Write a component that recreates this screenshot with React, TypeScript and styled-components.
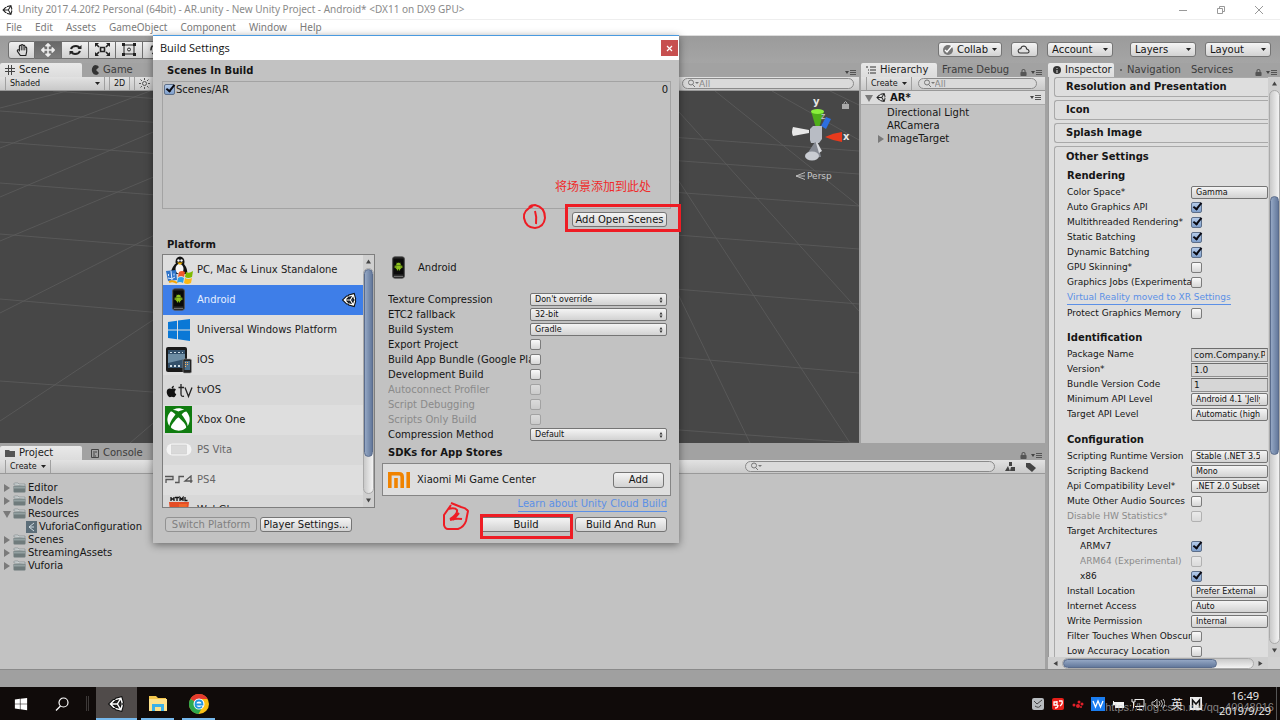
import React from 'react';
import styled, { createGlobalStyle, css } from 'styled-components';
import { FaUnity, FaWindows, FaApple, FaXbox, FaRegHandPaper, FaArrowsAlt, FaLock } from 'react-icons/fa';

const ui = '"DejaVu Sans", sans-serif';
const sys = '"Noto Sans", sans-serif';

const GlobalStyle = createGlobalStyle`
  *, *::before, *::after { box-sizing: border-box; }
  body { margin: 0; background: #a2a2a2; font-family: ${ui}; font-size: 10px; color: #151515; overflow: hidden; }
  ul { list-style: none; margin: 0; padding: 0; }
  button, input, select { font-family: inherit; margin: 0; }
  svg { display: block; flex: none; }
  h2, h3 { margin: 0; }
`;

/* ---------- shell ---------- */
const Shell = styled.div`
  height: 100vh;
  display: flex;
  flex-direction: column;
`;
const TitleBar = styled.header`
  height: 19px;
  flex: none;
  display: flex;
  align-items: center;
  gap: 4px;
  padding: 0 16px 0 2px;
  background: #fff;
  color: #8a8a8a;
  font: 10px/19px ${sys};
`;
const WindowButtons = styled.div`
  margin-left: auto;
  display: flex;
  gap: 28px;
`;
const WindowButton = styled.button`
  border: 0;
  padding: 0;
  background: none;
  color: #999;
  display: flex;
`;
const MenuBar = styled.nav`
  height: 17px;
  flex: none;
  display: flex;
  gap: 13px;
  padding: 0 6px;
  background: #fff;
  border-top: 1px solid #eee;
  border-bottom: 1px solid #ddd;
`;
const MenuItem = styled.button`
  border: 0;
  padding: 0;
  background: none;
  color: #7a7a7a;
  font: 10px/15px ${sys};
`;
const Toolbar = styled.div`
  height: 27px;
  flex: none;
  display: flex;
  align-items: center;
  justify-content: space-between;
  padding: 0 8px;
  background: linear-gradient(#9b9b9b, #a5a5a5);
`;
const Group = styled.div<{ $gap?: number; $end?: number }>`
  display: flex;
  align-items: center;
  gap: ${p => p.$gap ?? 0}px;
  padding-right: ${p => p.$end ?? 0}px;
`;
const ToolButton = styled.button<{ $on?: boolean }>`
  width: 27px;
  height: 18px;
  padding: 0;
  display: flex;
  align-items: center;
  justify-content: center;
  border: 1px solid #6f6f6f;
  border-left-width: 0;
  color: ${p => (p.$on ? '#eee' : '#222')};
  background: ${p => (p.$on ? 'linear-gradient(#686868, #7c7c7c)' : 'linear-gradient(#f0f0f0, #cfcfcf)')};
  &:first-child { border-left-width: 1px; border-radius: 3px 0 0 3px; }
`;
const face = css`
  border: 1px solid #757575;
  border-radius: 3px;
  background: linear-gradient(#f4f4f4, #d2d2d2);
  color: #151515;
`;
const TopButton = styled.button<{ $w: number }>`
  ${face}
  width: ${p => p.$w}px;
  height: 15px;
  padding: 0 4px;
  display: flex;
  align-items: center;
  justify-content: space-between;
  font-size: 10px;
  line-height: 13px;
`;

/* ---------- docked panes ---------- */
const Workspace = styled.div`
  flex: 1;
  min-height: 0;
  display: flex;
  gap: 3px;
`;
const MainArea = styled.div`
  flex: 1;
  min-width: 0;
  display: flex;
  flex-direction: column;
  gap: 3px;
`;
const TopRow = styled.div`
  flex: 1;
  min-height: 0;
  display: flex;
  gap: 2px;
`;
const Pane = styled.section<{ $w?: number; $h?: number }>`
  ${p => (p.$w ? `width: ${p.$w}px; flex: none;` : p.$h ? `height: ${p.$h}px; flex: none;` : 'flex: 1; min-width: 0;')}
  display: flex;
  flex-direction: column;
`;
const TabBar = styled.div`
  height: 14px;
  flex: none;
  display: flex;
  align-items: stretch;
`;
const Tab = styled.button<{ $on?: boolean; $w?: number }>`
  ${p => p.$w && `width: ${p.$w}px;`}
  display: flex;
  align-items: center;
  gap: 4px;
  padding: 0 5px;
  border: 0;
  font-size: 10px;
  line-height: 14px;
  white-space: nowrap;
  color: ${p => (p.$on ? '#1c1c1c' : '#3c3c3c')};
  background: ${p => (p.$on ? 'linear-gradient(#e9e9e9, #dcdcdc)' : 'none')};
  border-radius: 2px 2px 0 0;
`;
const TabEnd = styled.div`
  margin-left: auto;
  padding: 4px 3px 0 0;
  display: flex;
  gap: 4px;
  align-items: center;
  color: #555;
`;
const Strip = styled.div`
  height: 14px;
  flex: none;
  display: flex;
  align-items: center;
  padding: 0 5px;
  background: linear-gradient(#e2e2e2, #c9c9c9);
  border-bottom: 1px solid #999;
`;
const StripButton = styled.button<{ $w?: number }>`
  ${p => p.$w && `width: ${p.$w}px;`}
  height: 13px;
  padding: 0 4px;
  display: flex;
  align-items: center;
  justify-content: space-between;
  gap: 4px;
  border: 0;
  border-left: 1px solid #a0a0a0;
  border-right: 1px solid #a0a0a0;
  background: none;
  font-size: 8px;
  color: #151515;
`;
const SearchBox = styled.label<{ $w: number }>`
  width: ${p => p.$w}px;
  height: 11px;
  display: flex;
  align-items: center;
  padding: 0 4px;
  border: 1px solid #8a8a8a;
  border-radius: 6px;
  background: #dadada;
  color: #777;
  input {
    flex: 1;
    min-width: 0;
    height: 9px;
    padding: 0;
    border: 0;
    background: none;
    font-size: 9px;
    line-height: 9px;
    outline: 0;
  }
  input::placeholder { color: #888; }
`;
const SceneView = styled.div`
  flex: 1;
  min-height: 0;
  position: relative;
  overflow: hidden;
  background: #474747;
`;
const SceneGrid = styled.svg`
  position: absolute;
  inset: 0;
  width: 100%;
  height: 100%;
`;
const Gizmo = styled.div`
  position: absolute;
  right: 0;
  top: 0;
`;
const PaneBody = styled.div`
  flex: 1;
  min-height: 0;
  background: #c2c2c2;
`;
const SceneRoot = styled.div`
  height: 14px;
  display: flex;
  align-items: center;
  gap: 3px;
  padding: 0 4px;
  background: #dcdcdc;
  border-bottom: 1px solid #aaa;
  font-weight: bold;
  span { flex: 1; }
`;
const Tree = styled.ul<{ $top: number }>`
  padding-top: ${p => p.$top}px;
`;
const TreeRow = styled.li<{ $indent: number }>`
  display: flex;
  align-items: center;
  gap: 2px;
  padding-left: ${p => p.$indent}px;
  height: 13px;
  line-height: 13px;
`;

/* ---------- form parts ---------- */
const Check = styled.input.attrs({ type: 'checkbox' })`
  appearance: none;
  position: relative;
  width: 11px;
  height: 11px;
  flex: none;
  border: 1px solid #7c7c7c;
  border-radius: 2px;
  background: linear-gradient(#fafafa, #d6d6d6);
  &:checked { background: linear-gradient(#b4cbea, #7f9fcb); border-color: #5d6f8a; }
  &:checked::after {
    content: '';
    position: absolute;
    left: 3px;
    top: -2px;
    width: 5px;
    height: 9px;
    border: solid #0a0a12;
    border-width: 0 2px 2px 0;
    transform: rotate(38deg);
  }
  &:disabled { opacity: 0.45; }
`;
const SelectFrame = styled.span`
  ${face}
  position: relative;
  flex: 1;
  min-width: 0;
  height: 13px;
  display: flex;
  align-items: center;
  border-radius: 2px;
  padding-right: 3px;
  select {
    flex: 1;
    min-width: 0;
    appearance: none;
    border: 0;
    padding: 0 4px;
    background: none;
    color: #111;
    font-size: 8px;
    line-height: 10px;
    outline: 0;
  }
`;
const PushButton = styled.button<{ $w: number; $tall?: boolean }>`
  ${face}
  width: ${p => p.$w}px;
  height: ${p => (p.$tall ? 16 : 15)}px;
  padding: 0;
  font-size: 10px;
  line-height: 12px;
  white-space: nowrap;
  &:disabled { color: #808080; background: #c6c6c6; border-color: #929292; }
`;
const Row = styled.label<{ $dim?: boolean; $indent?: number }>`
  display: flex;
  align-items: center;
  height: 15px;
  padding-left: ${p => p.$indent ?? 0}px;
  color: ${p => (p.$dim ? '#8a8a8a' : '#151515')};
`;
const RowText = styled.span<{ $w: number }>`
  width: ${p => p.$w}px;
  flex: none;
  overflow: hidden;
  white-space: nowrap;
  line-height: 15px;
`;
const TextField = styled.input`
  flex: 1;
  min-width: 0;
  height: 14px;
  padding: 0 2px;
  border: 1px solid #8f8f8f;
  border-top-color: #6d6d6d;
  background: #d6d6d6;
  font-size: 9px;
  color: #151515;
  outline: 0;
`;

/* ---------- inspector ---------- */
const InspectorBody = styled.div`
  flex: 1;
  min-height: 0;
  display: grid;
  grid-template: minmax(0, 1fr) 12px / minmax(0, 1fr) 12px;
  background: #d2d2d2;
`;
const InspectorScroll = styled.div`
  overflow: hidden;
  padding-left: 5px;
  background: #dedede;
  border-left: 1px solid #999;
`;
const Fold = styled.div`
  border: 1px solid #a9a9a9;
  border-right: 0;
  border-radius: 3px 0 0 3px;
  padding-left: 11px;
  margin-bottom: 3px;
`;
const FoldTitle = styled.h2<{ $h?: number }>`
  font-size: 10px;
  line-height: ${p => p.$h ?? 18}px;
`;
const GroupTitle = styled.h3<{ $gap?: number }>`
  font-size: 10px;
  line-height: 18px;
  margin-top: ${p => p.$gap ?? 0}px;
`;
const FoldRows = styled.div`
  padding-left: 1px;
  font-size: 9px;
`;
const Link = styled.a`
  display: table;
  height: 14px;
  line-height: 14px;
  margin-bottom: 1px;
  color: #5c90e6;
  text-decoration: none;
  border-bottom: 1px solid #5c90e6;
`;
const Bar = styled.div<{ $across?: boolean }>`
  display: flex;
  flex-direction: ${p => (p.$across ? 'row' : 'column')};
  align-items: center;
  justify-content: space-between;
  gap: 3px;
  padding: ${p => (p.$across ? '0 4px' : '3px 0')};
  background: #cfcfcf;
`;
const Track = styled.div<{ $across?: boolean }>`
  flex: 1;
  display: flex;
  flex-direction: ${p => (p.$across ? 'row' : 'column')};
  ${p => (p.$across ? 'height: 11px;' : 'width: 11px;')}
  border: 1px solid #aaa;
  border-radius: 6px;
  background: linear-gradient(${p => (p.$across ? '180deg' : '90deg')}, #c9c9c9, #f3f3f3);
`;
const Thumb = styled.div<{ $across?: boolean; $size: number }>`
  flex: 0 0 ${p => p.$size}%;
  border-radius: 6px;
  border: 1px solid #5a6c8c;
  background: linear-gradient(${p => (p.$across ? '180deg' : '90deg')}, #94a7c4, #64799c);
`;
const Spacer = styled.div<{ $grow: number }>`
  flex: ${p => p.$grow} 0 0;
`;

/* ---------- dialog ---------- */
const Dialog = styled.div`
  position: absolute;
  left: 153px;
  top: 35px;
  width: 526px;
  background: #c2c2c2;
  border-top: 1px solid #4a9ae0;
  box-shadow: 0 2px 8px rgba(0, 0, 0, 0.45);
`;
const DialogTitle = styled.div`
  height: 24px;
  padding: 0 1px 0 7px;
  display: flex;
  align-items: center;
  justify-content: space-between;
  background: #fff;
  color: #111;
  font: 11px/24px "Open Sans", sans-serif;
`;
const CloseButton = styled.button`
  width: 17px;
  height: 16px;
  padding: 0;
  display: flex;
  align-items: center;
  justify-content: center;
  border: 0;
  background: #c75050;
`;
const DialogBody = styled.div`
  padding: 0 8px 11px 9px;
`;
const Caption = styled.h2<{ $h: number; $in: number }>`
  font-size: 10px;
  line-height: ${p => p.$h}px;
  padding-left: ${p => p.$in}px;
`;
const SceneList = styled.div`
  height: 128px;
  padding: 0 2px 0 1px;
  border: 1px solid #a3a3a3;
  label { display: flex; align-items: center; gap: 1px; height: 14px; }
  span { flex: 1; }
`;
const ButtonRow = styled.div`
  display: flex;
  justify-content: flex-end;
  padding: 3px 4px 8px 0;
`;
const Columns = styled.div`
  display: flex;
  gap: 7px;
`;
const PlatformBox = styled.div`
  width: 213px;
  height: 254px;
  flex: none;
  display: flex;
  border: 1px solid #7e7e7e;
`;
const PlatformList = styled.ul`
  flex: 1;
  overflow: hidden;
`;
const PlatformItem = styled.li<{ $on?: boolean; $dim?: boolean }>`
  height: 30px;
  display: flex;
  align-items: center;
  gap: 4px;
  padding: 0 6px 1px 1px;
  color: ${p => (p.$on ? '#e6eeff' : p.$dim ? '#666' : '#202020')};
  background: #dedede;
  &:nth-child(odd) { background: #d8d8d8; }
  &:nth-child(-n + 4) { background: #dedede; }
  ${p => p.$on && '&& { background: #3e7ee8; }'}
  > span:nth-child(2) { flex: 1; }
`;
const PlatformIcon = styled.span`
  width: 29px;
  height: 28px;
  display: flex;
  align-items: center;
  justify-content: center;
  flex: none;
`;
const Detail = styled.div`
  flex: 1;
  min-width: 0;
  display: flex;
  flex-direction: column;
`;
const DetailHead = styled.div`
  height: 38px;
  padding: 0 0 12px 10px;
  display: flex;
  align-items: center;
  gap: 13px;
`;
const DetailRows = styled.div`
  padding: 0 4px 0 6px;
`;
const StoreCard = styled.div`
  height: 33px;
  display: flex;
  align-items: center;
  gap: 7px;
  padding: 0 6px 0 5px;
  border: 1px solid #858585;
  background: #dedede;
  span { flex: 1; }
`;
const CloudLink = styled.div`
  align-self: flex-end;
  padding: 1px 4px 0 0;
`;
const Footer = styled.div`
  display: flex;
  justify-content: space-between;
  padding: 4px 4px 0 3px;
`;

/* ---------- annotations ---------- */
const RedBox = styled.div<{ $x: number; $y: number; $w: number; $h: number }>`
  position: absolute;
  left: ${p => p.$x}px;
  top: ${p => p.$y}px;
  width: ${p => p.$w}px;
  height: ${p => p.$h}px;
  border: 3px solid #ee1c24;
`;
const RedNote = styled.div`
  position: absolute;
  left: 402px;
  top: 142px;
  color: #f02a2a;
  font: 12px/16px "Noto Sans CJK SC", sans-serif;
  white-space: nowrap;
`;
const RedMark = styled.svg<{ $x: number; $y: number }>`
  position: absolute;
  left: ${p => p.$x}px;
  top: ${p => p.$y}px;
`;

/* ---------- status and task bar ---------- */
const StatusBar = styled.div`
  height: 18px;
  flex: none;
  background: #a0a0a0;
  border-top: 1px solid #8a8a8a;
`;
const TaskBar = styled.footer`
  position: relative;
  height: 33px;
  flex: none;
  display: flex;
  align-items: stretch;
  background: #100b0a;
  color: #f0f0f0;
`;
const TaskButton = styled.button<{ $on?: boolean; $run?: number }>`
  position: relative;
  width: 41px;
  padding: 0;
  display: flex;
  align-items: center;
  justify-content: center;
  border: 0;
  color: #fff;
  background: ${p => (p.$on ? '#504b4a' : 'none')};
  &::after {
    content: '';
    position: absolute;
    bottom: 0;
    height: 2px;
    width: ${p => p.$run ?? 0}px;
    background: #76b9ed;
  }
`;
const Divider = styled.div`
  width: 3px;
  margin: 9px 7px 9px 4px;
  border: solid #3d3938;
  border-width: 0 1px;
`;
const Tray = styled.div`
  margin-left: auto;
  display: flex;
  align-items: center;
  gap: 6px;
  font: 12px/14px "Noto Sans CJK SC", sans-serif;
`;
const Clock = styled.div`
  width: 68px;
  margin-right: 3px;
  padding: 1px 0 0 5px;
  align-self: stretch;
  text-align: center;
  font: 11px/15px "Open Sans", sans-serif;
  border-right: 1px solid #555;
`;
const Watermark = styled.div`
  position: absolute;
  right: 6px;
  top: 13px;
  color: rgba(200, 200, 200, 0.62);
  font: 11px/14px "Liberation Sans", sans-serif;
`;

/* ---------- drawings ---------- */
const Caret = () => <svg width="5" height="3"><path d="M0 0h5L2.500 3z" fill="#222" /></svg>;
const UpDown = () => <svg width="4" height="6"><path d="M2 0l1.500 2.500h-3zM2 6L.5 3.500h3z" fill="#333" /></svg>;
const Arrow = ({ d }: { d: 'u' | 'd' | 'l' | 'r' }) => (
  <svg width="7" height="7" viewBox="0 0 7 7">
    <path fill="#444" d={{ u: 'M1 5.500L3.500 1.500 6 5.500z', d: 'M1 1.500h5L3.500 5.500z', l: 'M5.500 1v5L1.500 3.500z', r: 'M1.500 1v5l4-2.500z' }[d]} />
  </svg>
);
const Twist = ({ open }: { open?: boolean }) => (
  <svg width="8" height="8"><path fill="#7a7a7a" d={open ? 'M0 1h8L4 8z' : 'M1 0v8l6-4z'} /></svg>
);
const PaneMenu = () => (
  <svg width="11" height="7" viewBox="0 0 11 7"><path d="M0 2h4L2 5z" fill="#444" /><path d="M5 1.500h6M5 3.500h6M5 5.500h6" stroke="#555" /></svg>
);
const Magnifier = () => (
  <svg width="12" height="9" viewBox="0 0 12 9" fill="none" stroke="#777"><circle cx="4" cy="3.500" r="2.500" /><path d="M5.500 5.500L8 8" /><path d="M8 3h4l-2 2z" fill="#777" stroke="none" /></svg>
);
const Folder = () => (
  <svg width="13" height="11" viewBox="0 0 13 11"><path d="M1 3V1.500Q1 1 2 1h3l1 1h6v2z" fill="#cfd5d6" stroke="#7a8586" strokeWidth=".6" /><path d="M.5 4h12v5.500q0 1-1 1h-10q-1 0-1-1z" fill="#6f7b7c" /><path d="M1 4.500h11v2H1z" fill="#93a0a1" /></svg>
);
const AndroidPhone = () => (
  <svg width="13" height="23" viewBox="0 0 14 24">
    <rect x=".5" y=".5" width="13" height="23" rx="2.500" fill="#1b1b1b" stroke="#555" />
    <rect x="2" y="3" width="10" height="16" fill="#0a0a0a" />
    <path d="M4.500 9.500a2.500 2.500 0 0 1 5 0zM4.500 10h5v3.500h-5zM3 10h1v2.500H3zM10 10h1v2.500h-1zM5.500 13.500h1V15h-1zM7.500 13.500h1V15h-1zM5 6.500l.8 1.200M9 6.500l-.8 1.200" fill="#8fc31f" stroke="#8fc31f" strokeWidth=".3" />
    <path d="M2 21.500h10" stroke="#888" />
  </svg>
);
const Desktops = () => (
  <svg width="28" height="28" viewBox="0 0 28 28">
    <ellipse cx="15" cy="6" rx="4.500" ry="5.500" fill="#111" />
    <path d="M10 8q-5 6-3 10h15q1-5-3-10z" fill="#111" />
    <ellipse cx="14.500" cy="13" rx="4" ry="5" fill="#f5f5f5" />
    <circle cx="13.500" cy="4.500" r="1.200" fill="#fff" /><circle cx="16.500" cy="4.500" r="1.200" fill="#fff" />
    <path d="M12 6.500h6l-3 2.500z" fill="#f7b500" />
    <path d="M1 15l10-1 1 10-9 1z" fill="#2f74c9" />
    <path d="M6 15l1 9M3.500 18v2M9 17.500v2M3 22q4 2 7-1" stroke="#dceaff" fill="none" />
    <path d="M14 16q3-2 6 0l-1 5q-3-2-6 0z" fill="#f1592a" /><path d="M21 16q3 2 7-1l-1 6q-4 2-7 0z" fill="#7fba00" />
    <path d="M13 22q3-2 6 0l-1 5q-3-2-6 0z" fill="#2aa0ea" /><path d="M20 22q3 2 7 0l-1 5q-4 2-7 0z" fill="#fdb913" />
    <path d="M4 26q4-2 8 1" stroke="#f7a500" strokeWidth="2" fill="none" />
  </svg>
);
const WinLogo = () => (
  <svg width="22" height="22" viewBox="0 0 22 22" fill="#0a78d6"><path d="M0 3l9-1.200V10.500H0zM10 1.600L22 0v10.500H10zM0 11.500h9v8.700L0 19zM10 11.500h12V22l-12-1.700z" /></svg>
);
const Tablet = () => (
  <svg width="26" height="28" viewBox="0 0 26 28">
    <rect x="0" y="1" width="21" height="25" rx="2" fill="#1a1a1a" />
    <rect x="2" y="4" width="17" height="18" fill="#33506a" />
    <path d="M2 8h17v5L2 17z" fill="#6d8da4" />
    <path d="M4 6h2v1H4zM8 6h2v1H8zM12 6h2v1h-2zM16 6h1v1h-1zM4 19h2v2H4zM8 19h2v2H8zM12 19h2v2h-2z" fill="#cfdde6" />
    <rect x="17" y="13" width="8.500" height="14" rx="1.500" fill="#222" stroke="#999" strokeWidth=".6" />
    <rect x="18.500" y="15" width="5.500" height="9" fill="#4b6f8c" />
    <path d="M19 16h1v1h-1zM21 16h1v1h-1zM19 18h1v1h-1zM21 18h1v1h-1zM19 20h1v1h-1z" fill="#ffb15c" />
  </svg>
);
const AppleTv = () => (
  <svg width="28" height="18" viewBox="0 0 28 18">
    <g transform="translate(0 4)"><FaApple size={13} color="#111" /></g>
    <path d="M16 3v10q0 3 3 2.200M13.500 6.500H19M20 6.500l3.500 9 3.500-9" fill="none" stroke="#222" strokeWidth="1.300" />
  </svg>
);
const XboxTile = () => (
  <svg width="27" height="27" viewBox="0 0 27 27"><rect width="27" height="27" fill="#107c10" /><g transform="translate(2 2)"><FaXbox size={23} color="#fff" /></g></svg>
);
const Vita = () => (
  <svg width="26" height="13" viewBox="0 0 26 13"><rect x=".5" y=".5" width="25" height="12" rx="6" fill="#f4f4f4" /><rect x="5.500" y="2" width="15" height="9" fill="#d9d9d9" stroke="#c8c8c8" strokeWidth=".5" /></svg>
);
const Ps4 = () => (
  <svg width="28" height="9" viewBox="0 0 28 9" fill="none" stroke="#555" strokeWidth="1.300"><path d="M1 8V4.500h7V1.500H0M10 7.500h4V1.500h5M27.500 6H20l6-5v7" /></svg>
);
const Html5 = () => (
  <svg width="20" height="28" viewBox="0 0 20 28"><path d="M2 1v4M5 1v4M2 3h3M6 1.500h4M8 1v4M11 5V1.500l1.500 2 1.500-2V5M16 1v3.500h2.500" stroke="#111" fill="none" strokeWidth="1.300" /><path d="M0 6h20l-2 19-8 3-8-3z" fill="#e44d26" /><path d="M10 8h8l-1.500 16-6.500 2z" fill="#f16529" /></svg>
);
const MiLogo = () => (
  <svg width="22" height="16" viewBox="0 0 22 16" fill="none" stroke="#f08300" strokeWidth="3.600"><path d="M1.800 16V1.800H11q3.200 0 3.200 3.200v11M8 6v10M20.200 0v16" /></svg>
);
const GridLines = () => (
  <SceneGrid viewBox="0 0 859 352" preserveAspectRatio="none" stroke="#5d5d5d" strokeWidth="1" fill="none">
    <path d="M53 0l806 60M0 20l859 63M0 51l859 64M0 92l859 66M0 143l859 70M0 208l859 74M0 290l859 62" opacity=".8" />
    <path d="M67 0L0 17M150 0L0 57M250 0L0 106M360 0L0 150M440 0L0 222M500 0L0 330M540 0L130 352" opacity=".8" />
    <path d="M830 0l29 14M772 0l87 49M715 0l144 115M660 0l199 220M620 0l230 352M580 0l170 352" opacity=".8" />
  </SceneGrid>
);
const GizmoArt = () => (
  <svg width="72" height="96" viewBox="0 0 72 96">
    <path d="M34 35l5-9 5 2-5 10z" fill="#2d6fe0" />
    <path d="M24 20h13l-5 17h-3z" fill="#4fae1a" /><ellipse cx="30.500" cy="20.500" rx="6.500" ry="2.500" fill="#8aef3c" />
    <path d="M6 36q-2 5 0 9l16-3v-3z" fill="#e8e8e8" />
    <path d="M55 41v10q-8-1-17-5 8-4 17-5z" fill="#e83a1c" />
    <path d="M23 38l3-3h9v13l-3 4h-8l-1-3z" fill="#b8bcc4" />
    <path d="M28 51l3 2 3 13H18z" fill="#858992" /><ellipse cx="25" cy="65" rx="7" ry="4.500" fill="#c9ccd2" />
    <path d="M30 51l5 9-3 2-3-10z" fill="#d8dade" />
    <path d="M9 85l9-3.500M9 85h9M9 85l9 3.500" stroke="#bbb" fill="none" />
    <g fill="#e8e8e8" fontFamily="DejaVu Sans" fontSize="10" fontWeight="bold"><text x="26" y="14">y</text><text x="56" y="49">x</text></g>
    <text x="34" y="28" fill="#ccc" fontFamily="DejaVu Sans" fontSize="8">z</text>
    <text x="20" y="88" fill="#c8c8c8" fontFamily="DejaVu Sans" fontSize="9">Persp</text>
    <path d="M55 13h7v5h-7z" fill="#aaa" /><path d="M57 13v-1q1.500-3 3 0v1" fill="none" stroke="#aaa" />
  </svg>
);

/* ---------- composed controls ---------- */
const Drop = ({ value, marks }: { value: string; marks?: boolean }) => (
  <SelectFrame><select><option>{value}</option></select>{marks && <UpDown />}</SelectFrame>
);
type Field = { t: string; k: 'check' | 'drop' | 'text' | 'none'; v?: string; on?: boolean; dim?: boolean; indent?: number };
const FieldRow = ({ f, w, marks }: { f: Field; w: number; marks?: boolean }) => (
  <Row as={f.k === 'none' ? 'div' : undefined} $dim={f.dim} $indent={f.indent}>
    <RowText $w={w - (f.indent ?? 0)}>{f.t}</RowText>
    {f.k === 'check' && <Check defaultChecked={f.on} disabled={f.dim} />}
    {f.k === 'drop' && <Drop value={f.v!} marks={marks} />}
    {f.k === 'text' && <TextField defaultValue={f.v} />}
  </Row>
);

const detailFields: Field[] = [
  { t: 'Texture Compression', k: 'drop', v: "Don't override" },
  { t: 'ETC2 fallback', k: 'drop', v: '32-bit' },
  { t: 'Build System', k: 'drop', v: 'Gradle' },
  { t: 'Export Project', k: 'check' },
  { t: 'Build App Bundle (Google Play)', k: 'check' },
  { t: 'Development Build', k: 'check' },
  { t: 'Autoconnect Profiler', k: 'check', dim: true },
  { t: 'Script Debugging', k: 'check', dim: true },
  { t: 'Scripts Only Build', k: 'check', dim: true },
  { t: 'Compression Method', k: 'drop', v: 'Default' },
];
const rendering: Field[] = [
  { t: 'Color Space*', k: 'drop', v: 'Gamma' },
  { t: 'Auto Graphics API', k: 'check', on: true },
  { t: 'Multithreaded Rendering*', k: 'check', on: true },
  { t: 'Static Batching', k: 'check', on: true },
  { t: 'Dynamic Batching', k: 'check', on: true },
  { t: 'GPU Skinning*', k: 'check' },
  { t: 'Graphics Jobs (Experimental)', k: 'check' },
];
const identification: Field[] = [
  { t: 'Package Name', k: 'text', v: 'com.Company.ProductName' },
  { t: 'Version*', k: 'text', v: '1.0' },
  { t: 'Bundle Version Code', k: 'text', v: '1' },
  { t: 'Minimum API Level', k: 'drop', v: "Android 4.1 'Jelly Bean'" },
  { t: 'Target API Level', k: 'drop', v: 'Automatic (highest installed)' },
];
const configuration: Field[] = [
  { t: 'Scripting Runtime Version', k: 'drop', v: 'Stable (.NET 3.5 Equivalent)' },
  { t: 'Scripting Backend', k: 'drop', v: 'Mono' },
  { t: 'Api Compatibility Level*', k: 'drop', v: '.NET 2.0 Subset' },
  { t: 'Mute Other Audio Sources', k: 'check' },
  { t: 'Disable HW Statistics*', k: 'check', dim: true },
  { t: 'Target Architectures', k: 'none' },
  { t: 'ARMv7', k: 'check', on: true, indent: 13 },
  { t: 'ARM64 (Experimental)', k: 'check', dim: true, indent: 13 },
  { t: 'x86', k: 'check', on: true, indent: 13 },
  { t: 'Install Location', k: 'drop', v: 'Prefer External' },
  { t: 'Internet Access', k: 'drop', v: 'Auto' },
  { t: 'Write Permission', k: 'drop', v: 'Internal' },
  { t: 'Filter Touches When Obscured', k: 'check' },
  { t: 'Low Accuracy Location', k: 'check' },
];
const platforms: { t: string; icon: React.ReactNode; on?: boolean; dim?: boolean }[] = [
  { t: 'PC, Mac & Linux Standalone', icon: <Desktops /> },
  { t: 'Android', icon: <AndroidPhone />, on: true },
  { t: 'Universal Windows Platform', icon: <WinLogo /> },
  { t: 'iOS', icon: <Tablet /> },
  { t: 'tvOS', icon: <AppleTv /> },
  { t: 'Xbox One', icon: <XboxTile /> },
  { t: 'PS Vita', icon: <Vita />, dim: true },
  { t: 'PS4', icon: <Ps4 />, dim: true },
  { t: 'WebGL', icon: <Html5 /> },
];

const ScrollBar = ({ across, before, size }: { across?: boolean; before: number; size: number }) => (
  <Bar $across={across}>
    <Arrow d={across ? 'l' : 'u'} />
    <Track $across={across}>
      <Spacer $grow={before} />
      <Thumb $across={across} $size={size} />
      <Spacer $grow={100 - before - size} />
    </Track>
    <Arrow d={across ? 'r' : 'd'} />
  </Bar>
);

const Search = ({ w, text }: { w: number; text?: string }) => (
  <SearchBox $w={w}><Magnifier /><input aria-label="Search" placeholder={text} /></SearchBox>
);

const ProjectRow = ({ t, open }: { t: string; open?: boolean }) => (
  <TreeRow $indent={3}><Twist open={open} /><Folder />{t}</TreeRow>
);

const BuildDialog = () => (
  <Dialog role="dialog" aria-label="Build Settings">
    <DialogTitle>
      Build Settings
      <CloseButton aria-label="Close"><svg width="7" height="7"><path d="M1 1l5 5M6 1L1 6" stroke="#fff" strokeWidth="1.200" /></svg></CloseButton>
    </DialogTitle>
    <DialogBody>
      <Caption $h={21} $in={5}>Scenes In Build</Caption>
      <SceneList><label><Check defaultChecked /><span>Scenes/AR</span>0</label></SceneList>
      <ButtonRow><PushButton $w={95}>Add Open Scenes</PushButton></ButtonRow>
      <Caption $h={19} $in={5}>Platform</Caption>
      <Columns>
        <PlatformBox>
          <PlatformList>
            {platforms.map(p => (
              <PlatformItem key={p.t} $on={p.on} $dim={p.dim}>
                <PlatformIcon>{p.icon}</PlatformIcon><span>{p.t}</span>
                {p.on && <FaUnity size={14} color="#fff" stroke="#111" strokeWidth={90} paintOrder="stroke" overflow="visible" />}
              </PlatformItem>
            ))}
          </PlatformList>
          <ScrollBar before={0} size={84} />
        </PlatformBox>
        <Detail>
          <DetailHead><AndroidPhone />Android</DetailHead>
          <DetailRows>{detailFields.map(f => <FieldRow key={f.t} f={f} w={142} marks />)}</DetailRows>
          <Caption $h={21} $in={6}>SDKs for App Stores</Caption>
          <StoreCard><MiLogo /><span>Xiaomi Mi Game Center</span><PushButton $w={51} $tall>Add</PushButton></StoreCard>
          <CloudLink><Link href="#cloud">Learn about Unity Cloud Build</Link></CloudLink>
        </Detail>
      </Columns>
      <Footer>
        <Group $gap={3}><PushButton $w={92} disabled>Switch Platform</PushButton><PushButton $w={92}>Player Settings...</PushButton></Group>
        <Group $gap={3}><PushButton $w={92}>Build</PushButton><PushButton $w={92}>Build And Run</PushButton></Group>
      </Footer>
    </DialogBody>
    <RedNote>将场景添加到此处</RedNote>
    <RedBox $x={412} $y={168} $w={116} $h={28} />
    <RedBox $x={327} $y={478} $w={93} $h={25} />
    <RedMark $x={368} $y={166} width="28" height="30" fill="none" stroke="#ee1c24" strokeWidth="2"><path d="M12 4Q2 8 3 16q2 10 11 10 9-1 10-10Q24 5 14 3q-4 0-6 2M14 9q2 6 1 13" /></RedMark>
    <RedMark $x={288} $y={464} width="32" height="32" fill="none" stroke="#ee1c24" strokeWidth="2"><path d="M10 5L3 15v10q1 4 4 4l10 0q6-2 8-8l2-10q-2-3-7-4L10 3M7 9q7-2 9 1 1 4-7 9M9 20q6-2 12-1M18 13l-6 7" /></RedMark>
  </Dialog>
);

const Inspector = () => (
  <Pane $w={232}>
    <TabBar>
      <Tab $on $w={66}><svg width="8" height="8"><circle cx="4" cy="4" r="4" fill="#333" /><path d="M4 2v1M4 4v3" stroke="#ddd" /></svg>Inspector</Tab>
      <Tab><svg width="4" height="4"><path d="M1 1h2v2H1z" fill="#666" /></svg>Navigation</Tab><Tab>Services</Tab>
      <TabEnd><FaLock size={7} /><PaneMenu /></TabEnd>
    </TabBar>
    <InspectorBody>
      <InspectorScroll>
        <Fold><FoldTitle>Resolution and Presentation</FoldTitle></Fold>
        <Fold><FoldTitle>Icon</FoldTitle></Fold>
        <Fold><FoldTitle>Splash Image</FoldTitle></Fold>
        <Fold>
          <FoldTitle $h={20}>Other Settings</FoldTitle>
          <FoldRows>
            <GroupTitle>Rendering</GroupTitle>
            {rendering.map(f => <FieldRow key={f.t} f={f} w={124} />)}
            <Link href="#xr">Virtual Reality moved to XR Settings</Link>
            <FieldRow f={{ t: 'Protect Graphics Memory', k: 'check' }} w={124} />
            <GroupTitle $gap={8}>Identification</GroupTitle>
            {identification.map(f => <FieldRow key={f.t} f={f} w={124} />)}
            <GroupTitle $gap={9}>Configuration</GroupTitle>
            {configuration.map(f => <FieldRow key={f.t} f={f} w={124} />)}
          </FoldRows>
        </Fold>
      </InspectorScroll>
      <ScrollBar before={19} size={47} />
      <ScrollBar across before={0} size={81} />
    </InspectorBody>
  </Pane>
);

export default function App() {
  return (
    <Shell>
      <GlobalStyle />
      <TitleBar>
        <FaUnity size={12} color="#222" />
        Unity 2017.4.20f2 Personal (64bit) - AR.unity - New Unity Project - Android* &lt;DX11 on DX9 GPU&gt;
        <WindowButtons>
          <WindowButton aria-label="Minimize"><svg width="10" height="10"><path d="M1 5.500h8" stroke="currentColor" /></svg></WindowButton>
          <WindowButton aria-label="Restore"><svg width="10" height="10" fill="none" stroke="currentColor"><path d="M1.500 3.500h5v5h-5zM3.500 3V1.500h5v5H7" /></svg></WindowButton>
          <WindowButton aria-label="Close"><svg width="10" height="10"><path d="M1 1l8 8M9 1L1 9" stroke="currentColor" /></svg></WindowButton>
        </WindowButtons>
      </TitleBar>
      <MenuBar>
        {['File', 'Edit', 'Assets', 'GameObject', 'Component', 'Window', 'Help'].map(m => <MenuItem key={m}>{m}</MenuItem>)}
      </MenuBar>
      <Toolbar>
        <Group>
          <ToolButton aria-label="Hand"><FaRegHandPaper size={12} /></ToolButton>
          <ToolButton $on aria-label="Move"><FaArrowsAlt size={14} /></ToolButton>
          <ToolButton aria-label="Rotate"><svg width="13" height="12" viewBox="0 0 13 12" fill="none" stroke="currentColor" strokeWidth="2"><path d="M2 5q1-3 5-3 2 0 4 2M11 7q-1 3-5 3-2 0-4-2" /><path d="M12.500 1v4h-4zM.5 11V7h4z" fill="currentColor" stroke="none" /></svg></ToolButton>
          <ToolButton aria-label="Scale"><svg width="15" height="13" viewBox="0 0 15 13" fill="none" stroke="currentColor" strokeWidth="1.600"><path d="M5.500 4.500h4v4h-4zM1 1l3 3M14 1l-3 3M1 12l3-3M14 12l-3-3" /><path d="M0 0h4L0 4zM15 0h-4l4 4zM0 13h4L0 9zM15 13h-4l4-4z" fill="currentColor" stroke="none" /></svg></ToolButton>
          <ToolButton aria-label="Rect"><svg width="14" height="13" viewBox="0 0 14 13" fill="none" stroke="currentColor"><path d="M2 2h10v9H2z" /><circle cx="7" cy="6.500" r="1.500" /><path d="M0 0h3v3H0zM11 0h3v3h-3zM0 10h3v3H0zM11 10h3v3h-3z" fill="currentColor" stroke="none" /></svg></ToolButton>
          <ToolButton aria-label="Transform"><svg width="13" height="13" fill="none" stroke="currentColor" strokeWidth="1.500"><circle cx="6.500" cy="6.500" r="5.500" strokeDasharray="5 3" /><path d="M6.500 3v7M3 6.500h7" /></svg></ToolButton>
        </Group>
        <Group $gap={17} $end={1}>
          <Group $gap={9}>
            <TopButton $w={64}><svg width="10" height="10"><circle cx="5" cy="5" r="5" fill="#777" /><path d="M2 5l2 2 5-6" stroke="#fff" fill="none" strokeWidth="1.500" /></svg>Collab<Caret /></TopButton>
            <TopButton $w={27} aria-label="Cloud"><svg width="15" height="11" viewBox="0 0 17 11"><path d="M5 9.500h8q3-1 1-3.500-1-1-2-1 0-3-3-3.500-3 0-3.500 3Q2 5 2.500 7.500 3 9.500 5 9.500z" fill="none" stroke="#333" strokeWidth="1.200" /></svg></TopButton>
            <TopButton $w={66}>Account<Caret /></TopButton>
          </Group>
          <Group $gap={9}>
            <TopButton $w={66}>Layers<Caret /></TopButton>
            <TopButton $w={66}>Layout<Caret /></TopButton>
          </Group>
        </Group>
      </Toolbar>
      <Workspace>
        <MainArea>
          <TopRow>
            <Pane>
              <TabBar>
                <Tab $on $w={82}><svg width="10" height="10" stroke="#444"><path d="M3.500 0v10M6.500 0v10M0 3.500h10M0 6.500h10" /></svg>Scene</Tab>
                <Tab $w={60}><svg width="12" height="10" viewBox="0 0 12 10"><path d="M5 0a4 5 0 1 0 4 8L6 5l3-3Q8 0 5 0" transform="translate(3 0)" fill="#333" /></svg>Game</Tab>
                <TabEnd><PaneMenu /></TabEnd>
              </TabBar>
              <Strip>
                <Group $gap={4}>
                  <StripButton $w={100}>Shaded<Caret /></StripButton>
                  <StripButton>2D</StripButton>
                  <StripButton aria-label="Lighting"><svg width="11" height="11" stroke="#555" fill="none"><circle cx="5.500" cy="5.500" r="2" /><path d="M5.500 0v2M5.500 9v2M0 5.500h2M9 5.500h2M1.500 1.500L3 3M8 8l1.500 1.500M1.500 9.500L3 8M8 3l1.500-1.500" /></svg></StripButton>
                </Group>
                <Spacer $grow={1} />
                <Search w={172} text="All" />
              </Strip>
              <SceneView><GridLines /><Gizmo><GizmoArt /></Gizmo></SceneView>
            </Pane>
            <Pane $w={184}>
              <TabBar>
                <Tab $on $w={76}><svg width="10" height="8" stroke="#333"><path d="M0 1h2M4 1h6M2 4h1M4 4h6M2 7h1M4 7h6" /></svg>Hierarchy</Tab>
                <Tab>Frame Debug</Tab>
                <TabEnd><FaLock size={7} /><PaneMenu /></TabEnd>
              </TabBar>
              <Strip><Group $gap={6}><StripButton>Create<Caret /></StripButton><Search w={119} text="All" /></Group></Strip>
              <PaneBody>
                <SceneRoot><Twist open /><FaUnity size={11} color="#222" /><span>AR*</span><PaneMenu /></SceneRoot>
                <Tree $top={1}>
                  <TreeRow $indent={26}>Directional Light</TreeRow>
                  <TreeRow $indent={26}>ARCamera</TreeRow>
                  <TreeRow $indent={16}><Twist />ImageTarget</TreeRow>
                </Tree>
              </PaneBody>
            </Pane>
          </TopRow>
          <Pane $h={223}>
            <TabBar>
              <Tab $on $w={82}><svg width="10" height="8"><path d="M0 1h4l1 1h5v6H0z" fill="#555" /></svg>Project</Tab>
              <Tab $w={70}><Spacer $grow={0} /><svg width="8" height="9" fill="none" stroke="#444"><path d="M.5.5h7v8h-7zM2 3h4M2 5h2M2 7h3" /></svg>Console</Tab>
              <TabEnd><FaLock size={7} /><PaneMenu /></TabEnd>
            </TabBar>
            <Strip>
              <StripButton>Create<Caret /></StripButton>
              <Spacer $grow={1} />
              <Group $gap={10} $end={3}>
                <Search w={250} />
                <svg width="10" height="10" fill="#444"><path d="M4 0h3v4H4zM0 9l3-5 2 5zM5 9h5V5H6z" /></svg>
                <svg width="12" height="10" fill="#444"><path d="M1 1h4l6 5-4 4-6-5z" /></svg>
              </Group>
            </Strip>
            <PaneBody>
              <Tree $top={7}>
                <ProjectRow t="Editor" />
                <ProjectRow t="Models" />
                <ProjectRow t="Resources" open />
                <TreeRow $indent={26}><svg width="11" height="12"><rect width="11" height="12" fill="#5b6d78" /><path d="M8 2L3 6l5 4M3 6h5" stroke="#cfdbe2" fill="none" /></svg>VuforiaConfiguration</TreeRow>
                <ProjectRow t="Scenes" />
                <ProjectRow t="StreamingAssets" />
                <ProjectRow t="Vuforia" />
              </Tree>
            </PaneBody>
          </Pane>
        </MainArea>
        <Inspector />
      </Workspace>
      <StatusBar />
      <TaskBar>
        <TaskButton aria-label="Start"><FaWindows size={14} /></TaskButton>
        <TaskButton aria-label="Search"><svg width="14" height="14" fill="none" stroke="#fff" strokeWidth="1.200"><circle cx="8.500" cy="5.500" r="4.500" /><path d="M5.500 9L1 13.500" /></svg></TaskButton>
        <Divider />
        <TaskButton $on $run={41} aria-label="Unity"><FaUnity size={16} color="#fff" stroke="#111" strokeWidth={80} paintOrder="stroke" overflow="visible" /></TaskButton>
        <TaskButton $run={33} aria-label="Explorer"><svg width="20" height="17" viewBox="0 0 20 17"><path d="M1 1h7l2 2h8v4H1z" fill="#f3c64c" /><path d="M1 4h18v12H1z" fill="#fde18c" /><path d="M4 16v-7h12v7h-3v-4H7v4z" fill="#3bb0e8" /></svg></TaskButton>
        <TaskButton $run={33} aria-label="Chrome"><svg width="20" height="20" viewBox="0 0 20 20"><circle cx="10" cy="10" r="10" fill="#fbc116" /><path d="M10 10L1.300 5A10 10 0 0 1 18.700 5H10z" fill="#e33b2e" /><path d="M10 10L1.300 5A10 10 0 0 0 9.500 20l4.500-8z" fill="#2da94f" /><circle cx="10" cy="10" r="5.500" fill="#fff" /><path d="M6.500 10.500h7q0-4-3.500-4t-3.500 3.800q0 3.500 3.500 3.500 2 0 3-1.300" fill="none" stroke="#2196e0" strokeWidth="1.800" /></svg></TaskButton>
        <Tray>
          <svg width="14" height="14"><rect x="1" y="1" width="12" height="12" rx="2" fill="#b8bcc0" /><path d="M3 4l3 3 5-4M4 9q4 3 6-1" stroke="#444" fill="none" /></svg>
          <svg width="14" height="14"><rect x="1" y="1" width="12" height="12" rx="2" fill="#e61f19" /><path d="M6 5H3v3h3V4M4 11q3 0 3-3M8 4h3q1 3-2 5" stroke="#fff" fill="none" strokeWidth="1.300" /></svg>
          <svg width="14" height="14" fill="#e0202a"><circle cx="8" cy="5" r="1.500" /><circle cx="3" cy="8" r="1.500" /><circle cx="7" cy="9" r="2" /><circle cx="11" cy="7" r="1.500" /><circle cx="10" cy="10" r="1" /></svg>
          <svg width="14" height="14"><rect width="14" height="14" fill="#1a7df0" /><path d="M2 4l2.500 6L7 4l2.500 6L12 4" stroke="#fff" fill="none" strokeWidth="1.300" /></svg>
          <svg width="14" height="14"><path d="M3 5h10v6H4V8H2V4h1z" fill="#f2f2f2" /></svg>
          <svg width="14" height="14" fill="none" stroke="#eee"><path d="M4 2.500h9v7H4M1 2v3h3V2M2.500 5v6M6 12.500h5" /></svg>
          <svg width="14" height="14" fill="none" stroke="#bbb"><path d="M1 5h2l3-3v9L3 8H1zM8 4q2 3 0 5M10 3q3 4 0 7M12 2q4 5 0 9" /></svg>
          <span>英</span>
          <svg width="14" height="14"><rect x="1" y="0" width="12" height="13" fill="#eee" /><path d="M3.500 11V3L7 7l3.500-4v8" stroke="#111" fill="none" strokeWidth="1.500" /></svg>
          <Clock>16:49<br />2019/9/29</Clock>
        </Tray>
        <Watermark>https://blog.csdn.net/qq_40948016</Watermark>
      </TaskBar>
      <BuildDialog />
    </Shell>
  );
}
